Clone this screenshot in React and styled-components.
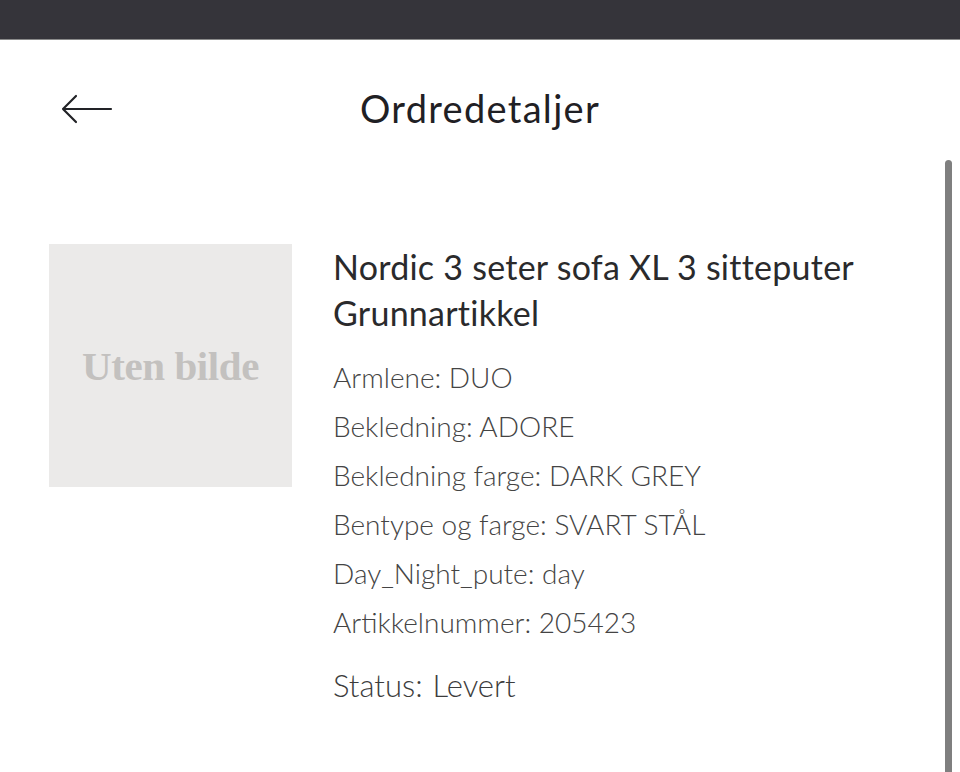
import styled, { createGlobalStyle } from 'styled-components';

const GlobalStyle = createGlobalStyle`
  html, body {
    margin: 0;
    padding: 0;
    background: #ffffff;
  }
  body {
    font-family: Lato, "Noto Sans", sans-serif;
    overflow: hidden;
  }
`;

const Page = styled.div`
  position: relative;
  width: 960px;
  height: 772px;
  overflow: hidden;
  background: #ffffff;
`;

const StatusBar = styled.div`
  height: 39px;
  background: #35343a;
  border-bottom: 1px solid #8a8a8a;
`;

const Header = styled.header`
  position: relative;
  display: flex;
  align-items: center;
  justify-content: center;
  height: 138px;
`;

const BackButton = styled.button`
  position: absolute;
  left: 60px;
  top: 54px;
  display: flex;
  padding: 0;
  border: none;
  background: none;
  cursor: pointer;
`;

const Title = styled.h1`
  margin: 0;
  margin-top: -2px;
  font-size: 38px;
  font-weight: 400;
  color: #1f2024;
  letter-spacing: 1.3px;
`;

const Content = styled.main`
  display: flex;
  align-items: flex-start;
  gap: 41px;
  padding: 66px 0 0 49px;
`;

const Placeholder = styled.div`
  flex: none;
  display: flex;
  align-items: center;
  justify-content: center;
  width: 243px;
  height: 243px;
  background: #ebeae9;
  font-family: "Liberation Serif", "DejaVu Serif", serif;
  font-weight: bold;
  font-size: 41px;
  letter-spacing: -0.4px;
  color: #c3c1bf;
`;

const Details = styled.div`
  display: flex;
  flex-direction: column;
`;

const ProductName = styled.h2`
  margin: 0 0 17px;
  font-size: 34px;
  line-height: 46px;
  font-weight: 400;
  letter-spacing: 0.25px;
  color: #2a2a2c;
`;

const Attribute = styled.div`
  font-size: 28px;
  line-height: 49px;
  font-weight: 300;
  color: #444444;
`;

const Status = styled.div`
  display: flex;
  gap: 10px;
  margin-top: 14px;
  font-size: 31px;
  line-height: 49px;
  font-weight: 300;
  color: #3c3c3c;
`;

const Scrollbar = styled.div`
  position: absolute;
  right: 8px;
  top: 160px;
  bottom: 0;
  width: 7px;
  border-radius: 4px 4px 0 0;
  background: #7f7f7f;
`;

const ArrowIcon = () => (
  <svg width="54" height="30" viewBox="0 0 54 30" fill="none">
    <path d="M3 15 H51 M16 2 L3 15 L16 28" stroke="#222327" strokeWidth="2.2" strokeLinecap="round" strokeLinejoin="round" />
  </svg>
);

const attributes = [
  'Armlene: DUO',
  'Bekledning: ADORE',
  'Bekledning farge: DARK GREY',
  'Bentype og farge: SVART STÅL',
  'Day_Night_pute: day',
  'Artikkelnummer: 205423',
];

const App = () => (
  <>
    <GlobalStyle />
    <Page>
      <StatusBar />
      <Header>
        <BackButton aria-label="Tilbake">
          <ArrowIcon />
        </BackButton>
        <Title>Ordredetaljer</Title>
      </Header>
      <Content>
        <Placeholder>Uten bilde</Placeholder>
        <Details>
          <ProductName>
            Nordic 3 seter sofa XL 3 sitteputer
            <br />
            Grunnartikkel
          </ProductName>
          {attributes.map((a) => (
            <Attribute key={a}>{a}</Attribute>
          ))}
          <Status>
            <span>Status:</span>
            <span>Levert</span>
          </Status>
        </Details>
      </Content>
      <Scrollbar />
    </Page>
  </>
);

export default App;
